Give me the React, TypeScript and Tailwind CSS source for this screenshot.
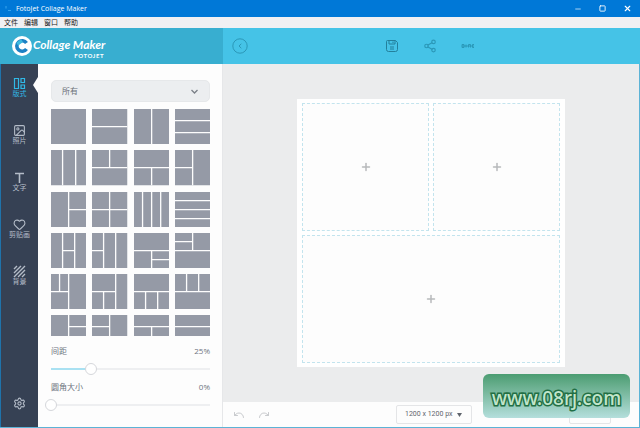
import { useState } from 'react'
import { Heart, Image, Minus, Plus, Redo, Settings, Share2, Square, Undo, X } from 'lucide-react'
import type { ReactNode } from 'react'

const menus = ['文件', '编辑', '窗口', '帮助']

// divider lines of every template, on a 35x35 tile
const templates = [
  '',
  'M0 17.5H35',
  'M17.5 0V35',
  'M0 11.5H35M0 23.5H35',
  'M11.5 0V35M24.5 0V35',
  'M0 17.5H35M17.5 0V17.5',
  'M0 17.5H35M17.5 17.5V35',
  'M17.5 0V35M0 17.5H17.5',
  'M17.5 0V35M17.5 17.5H35',
  'M17.5 0V35M0 17.5H35',
  'M8.5 0V35M17.5 0V35M26.5 0V35',
  'M0 8.5H35M0 17.5H35M0 26.5H35',
  'M11.5 0V35M23.5 0V35M11.5 17.5H23.5',
  'M11.5 0V35M23.5 0V35M0 17.5H11.5',
  'M0 17.5H35M17.5 17.5V35M17.5 26.5H35',
  'M0 17.5H35M17.5 0V17.5M0 8.5H17.5',
  'M17.5 0V35M0 17.5H17.5M8.5 0V17.5',
  'M23.5 0V35M0 17.5H23.5M11.5 17.5V35',
  'M0 17.5H35M11.5 17.5V35M23.5 17.5V35',
  'M0 17.5H35M11.5 0V17.5M23.5 0V17.5',
  'M17.5 0V35M17.5 11.5H35M17.5 23.5H35',
  'M17.5 0V35M0 11.5H17.5M0 23.5H17.5',
  'M0 11.5H35M17.5 11.5V35',
  'M0 11.5H35M0 23.5H35',
]

const LayoutIcon = () => (
  <svg width="13" height="13" viewBox="0 0 13 13" fill="none" stroke="currentColor" strokeWidth="1.2">
    <path d="M1.5 1.5h4v10h-4zM8 1.5h3.5v4H8zM8 8h3.5v3.5H8z" />
  </svg>
)

const TextIcon = () => (
  <svg width="13" height="13" viewBox="0 0 13 13" fill="none" stroke="currentColor" strokeWidth="1.6">
    <path d="M2 2.5h9M6.5 2.5V12" />
  </svg>
)

const StripesIcon = () => (
  <svg width="13" height="13" viewBox="0 0 13 13" fill="none" stroke="currentColor" strokeWidth="1.4">
    <path d="M1 4l3-3M1 8l7-7M1 12L12 1M5 12l7-7M9 12l3-3" />
  </svg>
)

const SaveIcon = () => (
  <svg width="14" height="14" viewBox="0 0 14 14" fill="none" stroke="currentColor">
    <path d="M2.5 1.5h8l2 2v7a2 2 0 0 1-2 2h-7a2 2 0 0 1-2-2v-8a1 1 0 0 1 1-1z" />
    <path d="M4 1.5v3.5h6V1.5M8 2.5v1.5M5 8h4M5 10h4" />
  </svg>
)

const tabs: { label: string; icon: ReactNode }[] = [
  { label: '版式', icon: <LayoutIcon /> },
  { label: '照片', icon: <Image size={13} strokeWidth={2} /> },
  { label: '文字', icon: <TextIcon /> },
  { label: '剪贴画', icon: <Heart size={13} strokeWidth={2} /> },
  { label: '背景', icon: <StripesIcon /> },
]

const TitleBar = () => (
  <div className="flex h-[17px] shrink-0 items-center justify-between bg-[#0078d7] pl-[5px] pr-2 text-white">
    <div className="flex items-center gap-1">
      <svg width="7" height="7" viewBox="0 0 7 7" fill="none" stroke="#38a5ee">
        <path d="M1 1v2.5M3 5.5h3" />
      </svg>
      <span className="text-[7px] leading-none">FotoJet Collage Maker</span>
    </div>
    <div className="flex items-center gap-[17px]">
      <button type="button" aria-label="Minimize"><Minus size={8} /></button>
      <button type="button" aria-label="Maximize"><Square size={7} strokeWidth={3} /></button>
      <button type="button" aria-label="Close"><X size={9} strokeWidth={3} /></button>
    </div>
  </div>
)

const Header = () => (
  <header className="flex h-9 shrink-0 bg-[#45c3e7]">
    <div className="flex w-[223px] shrink-0 items-center bg-[#38aed0] pl-3 text-white">
      <svg width="20" height="20" viewBox="0 0 20 20">
        <circle cx="10" cy="10" r="10" fill="#fff" />
        <path d="M14.5 7A5.3 5.3 0 1 0 14.5 13" fill="none" stroke="#1d81c4" strokeWidth="3.6" />
        <path d="M5.2 8.2L10 4.7" fill="none" stroke="#3cb9df" strokeWidth="3.4" />
        <path d="M10 8l2 2-2 2-2-2z" fill="#fff" />
      </svg>
      <div className="flex flex-col items-end pt-1 pl-px font-[Lato] font-bold">
        <span className="text-[12px] italic leading-[15px]">Collage Maker</span>
        <span className="pr-px text-[6px] leading-[8px] tracking-widest">FOTOJET</span>
      </div>
    </div>
    <div className="flex flex-1 items-center text-[#2b98b8]">
      <button type="button" aria-label="Back" className="ml-[9px]">
        <svg width="16" height="16" viewBox="0 0 16 16" fill="none" stroke="currentColor">
          <circle cx="8" cy="8" r="7.2" />
          <path d="M9.3 5.8L7 8l2.3 2.2" />
        </svg>
      </button>
      <div className="flex flex-1 items-center justify-center gap-6 pr-[28px]">
        <button type="button" aria-label="Save" className="text-[#23809c]"><SaveIcon /></button>
        <button type="button" aria-label="Share"><Share2 size={14} strokeWidth={2} /></button>
        <button type="button" aria-label="Print">
          <svg width="14" height="6" viewBox="0 0 14 6" fill="none" stroke="currentColor">
            <path d="M1 1.5v3h2v-3zM5 1.5v3M7.5 4.5v-3h2v3M11.5 1.5v3h1.5M11.5 1.5h1.5M1 3h12" />
          </svg>
        </button>
      </div>
    </div>
  </header>
)

const Sidebar = () => (
  <nav className="flex w-[38px] shrink-0 flex-col items-center border-l border-[#1f73ab] bg-[#364154] pt-[13px] pb-[17px] text-[#b4bcc8]">
    {tabs.map((tab, i) => (
      <button
        key={tab.label}
        type="button"
        className={`relative flex h-[47px] w-full shrink-0 flex-col items-center text-[7px] leading-[8px] ${i === 0 ? 'text-[#31b9e6]' : ''}`}
      >
        {tab.icon}
        {tab.label}
        {i === 0 && (
          <svg className="absolute right-0 top-0" width="5" height="16" viewBox="0 0 5 16" fill="#fdfdfd">
            <path d="M5 0v16L0 8z" />
          </svg>
        )}
      </button>
    ))}
    <button type="button" aria-label="Settings" className="mt-auto"><Settings size={13} /></button>
  </nav>
)

const Slider = ({ id, label, initial }: { id: string; label: string; initial: number }) => {
  const [value, setValue] = useState(initial)

  return (
    <div className="flex h-9 flex-col">
      <div className="flex justify-between leading-[12px] text-[#6e7480]">
        <label htmlFor={id}>{label}</label>
        <output htmlFor={id}>{value}%</output>
      </div>
      <div className="relative -mx-[6px] mt-[6px] flex h-3 items-center px-[6px]">
        <div className="h-[2px] flex-1 bg-[#eeeff1]">
          <div className="h-[2px] bg-[#a9e1f2]" style={{ width: `${value}%` }} />
        </div>
        <input
          id={id}
          type="range"
          min={0}
          max={100}
          value={value}
          onChange={(e) => setValue(Number(e.target.value))}
          className="absolute inset-0 h-3 w-full appearance-none bg-transparent [&::-webkit-slider-thumb]:size-3 [&::-webkit-slider-thumb]:appearance-none [&::-webkit-slider-thumb]:rounded-full [&::-webkit-slider-thumb]:border [&::-webkit-slider-thumb]:border-[#d5d7db] [&::-webkit-slider-thumb]:bg-white"
        />
      </div>
    </div>
  )
}

const TemplatePanel = () => (
  <section className="flex w-[185px] shrink-0 flex-col border-r border-[#e6e7e9] bg-[#fdfdfd] pt-4 pl-[13px] pr-3 text-[8px]">
    <div className="relative shrink-0">
      <select
        aria-label="模板分类"
        className="block h-[22px] w-full appearance-none rounded-[5px] border border-[#e6e8ea] bg-[#eceef0] pl-[10px] text-[8px] text-[#6b7078]"
      >
        <option>所有</option>
      </select>
      <svg className="pointer-events-none absolute right-3 top-2" width="7" height="7" viewBox="0 0 7 7" fill="none" stroke="#7b8088" strokeWidth="1.3">
        <path d="M.5 2l3 3 3-3" />
      </svg>
    </div>
    <div className="mt-[7px] grid min-h-0 flex-1 auto-rows-min grid-cols-4 gap-[6px] overflow-hidden">
      {templates.map((lines, i) => (
        <button key={i} type="button" aria-label={`模板 ${i + 1}`}>
          <svg className="block w-full" viewBox="0 0 35 35">
            <path d="M0 0h35v35H0z" fill="#959aa6" />
            <path d={lines} stroke="#fdfdfd" strokeWidth="1.3" />
          </svg>
        </button>
      ))}
    </div>
    <div className="shrink-0 pt-[9px] pb-[10px]">
      <Slider id="spacing" label="间距" initial={25} />
      <Slider id="radius" label="圆角大小" initial={0} />
    </div>
  </section>
)

const Slot = ({ className = '' }: { className?: string }) => (
  <button
    type="button"
    aria-label="添加照片"
    className={`flex items-center justify-center border border-dashed border-[#c3e4ee] bg-[#fdfdfd] text-[#b7b9bb] ${className}`}
  >
    <Plus size={12} strokeWidth={3} />
  </button>
)

const Workspace = () => (
  <main className="flex min-w-0 flex-1 flex-col">
    <div className="flex min-h-0 flex-1 justify-center bg-[#ebeced] py-[35px]">
      <div className="grid aspect-square h-full grid-cols-2 grid-rows-2 gap-1 bg-white px-[5px] py-1">
        <Slot />
        <Slot />
        <Slot className="col-span-2" />
      </div>
    </div>
    <footer className="flex h-[25px] shrink-0 items-center bg-[#fdfdfd] pl-[10px] pr-1 text-[#c9cbce]">
      <div className="flex flex-1 items-center gap-[13px]">
        <button type="button" aria-label="撤销"><Undo size={12} /></button>
        <button type="button" aria-label="重做"><Redo size={12} /></button>
      </div>
      <div className="relative">
        <select
          aria-label="画布尺寸"
          className="block h-[19px] w-[76px] appearance-none rounded-[2px] border border-[#e4e5e7] pl-2 font-[Roboto] text-[7px] text-[#5f646c]"
        >
          <option>1200 x 1200 px</option>
        </select>
        <svg className="pointer-events-none absolute right-[10px] top-2" width="5" height="4" viewBox="0 0 5 4" fill="#5f646c">
          <path d="M0 0h5L2.5 4z" />
        </svg>
      </div>
      <div className="flex flex-1 justify-end">
        <button type="button" aria-label="缩放" className="mr-6 h-[19px] w-[42px] rounded-[2px] border border-[#e4e5e7]" />
      </div>
    </footer>
  </main>
)

const App = () => (
  <div className="relative flex h-screen flex-col overflow-hidden border-b border-[#5cb3d6] bg-white font-['Open_Sans','Noto_Sans_CJK_SC',sans-serif]">
    <TitleBar />
    <div className="flex h-[11px] shrink-0 items-center gap-[6px] bg-[#f0f0f3] pl-1 text-[7px] leading-none text-[#222]">
      {menus.map((menu) => (
        <button key={menu} type="button">{menu}</button>
      ))}
    </div>
    <Header />
    <div className="flex min-h-0 flex-1 border-r border-[#5cb3d6]">
      <Sidebar />
      <TemplatePanel />
      <Workspace />
    </div>
    <a
      href="#"
      className="absolute bottom-[9px] right-[10px] flex h-11 w-[147px] items-center justify-center rounded-md bg-linear-to-b from-[#4b9d72] to-[#b4dfdc] pt-1 font-['Noto_Sans',sans-serif] text-[19px] font-medium leading-none text-[#c2e6cb] [-webkit-text-stroke:3px_#226f45] [paint-order:stroke_fill]"
    >
      www.08rj.com
    </a>
  </div>
)

export default App
